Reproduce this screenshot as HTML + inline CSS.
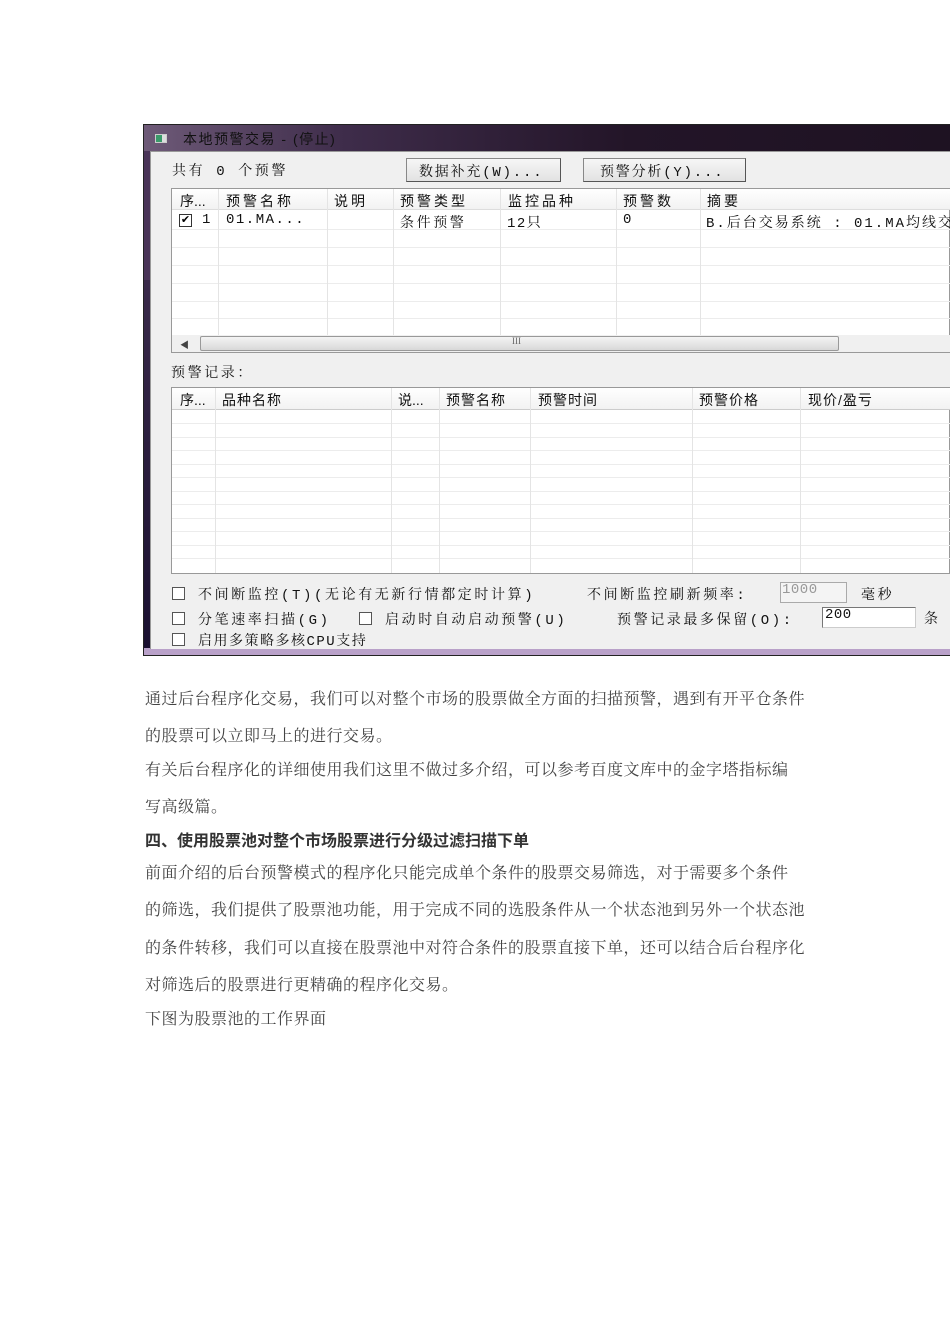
<!DOCTYPE html>
<html><head><meta charset="utf-8"><style>
*{margin:0;padding:0;box-sizing:border-box}
body{width:950px;height:1344px;background:#fff;position:relative;overflow:hidden;font-family:"Liberation Serif","Noto Serif CJK SC",serif}
.a{position:absolute;white-space:nowrap}
.w{font-family:"Liberation Sans","Noto Sans CJK SC",sans-serif;font-size:14px;letter-spacing:3px;color:#111}
.m{font-family:"Liberation Mono","Noto Serif CJK SC",serif;font-size:14px;letter-spacing:2.6px;color:#111}
.p{font-size:16px;letter-spacing:0.5px;color:#444;left:145px}
.vl{position:absolute;width:1px;background:#e4e4e4}
.hl{position:absolute;height:1px;background:#ececec}
.cb{position:absolute;width:13px;height:13px;border:1px solid #555;background:#fff}
</style></head><body>
<div class="a" style="left:143px;top:124px;width:807px;height:532px;background:#4a3458;border:1px solid #222"></div>
<div class="a" style="left:144px;top:125px;width:806px;height:26px;background:linear-gradient(90deg,#6e5a78 0%,#3e2c4a 25%,#231528 60%,#1e1222 100%)"></div>
<div class="a" style="left:144px;top:280px;width:6px;height:370px;background:linear-gradient(#3a2a4a,#1a1030)"></div>
<div class="a" style="left:144px;top:648px;width:806px;height:7px;background:#b9a1c9"></div>
<div class="a" style="left:150px;top:151px;width:800px;height:498px;background:#f0f0f0;border-left:1px solid #999;border-top:1px solid #999"></div>
<div class="a" style="left:155px;top:134px;width:12px;height:9px;background:linear-gradient(90deg,#3a9a6a 60%,#ddd 60%);border:1px solid #ccc"></div>
<div class="a w" style="left:183px;top:129px;color:#111;letter-spacing:1.5px">本地预警交易 - (停止)</div>
<div class="a m" style="left:172px;top:160px">共有 0 个预警</div>
<div class="a" style="left:406px;top:158px;width:155px;height:24px;background:linear-gradient(#f6f6f6,#e2e2e2);border:1px solid #888;border-right-color:#555;border-bottom-color:#555"></div>
<div class="a m" style="left:419px;top:161px;letter-spacing:1.8px">数据补充(W)...</div>
<div class="a" style="left:583px;top:158px;width:163px;height:24px;background:linear-gradient(#f6f6f6,#e2e2e2);border:1px solid #888;border-right-color:#555;border-bottom-color:#555"></div>
<div class="a m" style="left:600px;top:161px;letter-spacing:1.8px">预警分析(Y)...</div>
<div class="a" style="left:171px;top:188px;width:779px;height:165px;background:#fff;border:1px solid #999"></div>
<div class="a" style="left:172px;top:189px;width:778px;height:21px;background:linear-gradient(#fff,#f2f2f2);border-bottom:1px solid #ddd"></div>
<div class="hl" style="left:172px;top:229px;width:778px"></div>
<div class="hl" style="left:172px;top:247px;width:778px"></div>
<div class="hl" style="left:172px;top:265px;width:778px"></div>
<div class="hl" style="left:172px;top:283px;width:778px"></div>
<div class="hl" style="left:172px;top:301px;width:778px"></div>
<div class="hl" style="left:172px;top:318px;width:778px"></div>
<div class="vl" style="left:218px;top:189px;height:146px"></div>
<div class="vl" style="left:327px;top:189px;height:146px"></div>
<div class="vl" style="left:393px;top:189px;height:146px"></div>
<div class="vl" style="left:500px;top:189px;height:146px"></div>
<div class="vl" style="left:616px;top:189px;height:146px"></div>
<div class="vl" style="left:700px;top:189px;height:146px"></div>
<div class="a w" style="left:180px;top:191px;letter-spacing:0">序...</div>
<div class="a w" style="left:226px;top:191px">预警名称</div>
<div class="a w" style="left:334px;top:191px">说明</div>
<div class="a w" style="left:400px;top:191px">预警类型</div>
<div class="a w" style="left:508px;top:191px">监控品种</div>
<div class="a w" style="left:623px;top:191px">预警数</div>
<div class="a w" style="left:707px;top:191px">摘要</div>
<div class="cb" style="left:179px;top:214px;border-color:#333;font-size:11px;line-height:11px;text-align:center">✔</div>
<div class="a m" style="left:202px;top:212px">1</div>
<div class="a m" style="left:226px;top:212px;letter-spacing:1.5px">01.MA...</div>
<div class="a m" style="left:400px;top:212px">条件预警</div>
<div class="a m" style="left:507px;top:212px;letter-spacing:1.5px">12只</div>
<div class="a m" style="left:623px;top:212px">0</div>
<div class="a m" style="left:706px;top:212px;letter-spacing:2px">B.后台交易系统 : 01.MA均线交</div>
<div class="a" style="left:172px;top:335px;width:778px;height:17px;background:#f0f0f0"></div>
<div class="a" style="left:180px;top:338px;font-size:9px;color:#444">◀</div>
<div class="a" style="left:200px;top:336px;width:639px;height:15px;background:linear-gradient(#f4f4f4,#d8d8d8);border:1px solid #999;border-radius:2px"></div>
<div class="a" style="left:512px;top:336px;font-size:9px;color:#666">III</div>
<div class="a m" style="left:171px;top:362px">预警记录：</div>
<div class="a" style="left:171px;top:387px;width:779px;height:187px;background:#fff;border:1px solid #999"></div>
<div class="a" style="left:172px;top:388px;width:778px;height:22px;background:linear-gradient(#fff,#f2f2f2);border-bottom:1px solid #ccc"></div>
<div class="hl" style="left:172px;top:423px;width:778px"></div>
<div class="hl" style="left:172px;top:437px;width:778px"></div>
<div class="hl" style="left:172px;top:450px;width:778px"></div>
<div class="hl" style="left:172px;top:464px;width:778px"></div>
<div class="hl" style="left:172px;top:477px;width:778px"></div>
<div class="hl" style="left:172px;top:491px;width:778px"></div>
<div class="hl" style="left:172px;top:504px;width:778px"></div>
<div class="hl" style="left:172px;top:518px;width:778px"></div>
<div class="hl" style="left:172px;top:531px;width:778px"></div>
<div class="hl" style="left:172px;top:545px;width:778px"></div>
<div class="hl" style="left:172px;top:558px;width:778px"></div>
<div class="vl" style="left:215px;top:388px;height:185px"></div>
<div class="vl" style="left:391px;top:388px;height:185px"></div>
<div class="vl" style="left:439px;top:388px;height:185px"></div>
<div class="vl" style="left:530px;top:388px;height:185px"></div>
<div class="vl" style="left:692px;top:388px;height:185px"></div>
<div class="vl" style="left:800px;top:388px;height:185px"></div>
<div class="a w" style="left:180px;top:390px;letter-spacing:0">序...</div>
<div class="a w" style="left:222px;top:390px;letter-spacing:1px">品种名称</div>
<div class="a w" style="left:398px;top:390px;letter-spacing:0">说...</div>
<div class="a w" style="left:446px;top:390px;letter-spacing:1px">预警名称</div>
<div class="a w" style="left:538px;top:390px;letter-spacing:1px">预警时间</div>
<div class="a w" style="left:699px;top:390px;letter-spacing:1px">预警价格</div>
<div class="a w" style="left:808px;top:390px;letter-spacing:1px">现价/盈亏</div>
<div class="cb" style="left:172px;top:587px"></div>
<div class="a m" style="left:198px;top:584px">不间断监控(T)(无论有无新行情都定时计算)</div>
<div class="a m" style="left:587px;top:584px">不间断监控刷新频率:</div>
<div class="a" style="left:780px;top:582px;width:67px;height:21px;background:#f4f4f4;border:1px solid #aaa"></div>
<div class="a m" style="left:782px;top:582px;color:#999;letter-spacing:0.5px">1000</div>
<div class="a m" style="left:861px;top:584px">毫秒</div>
<div class="cb" style="left:172px;top:612px"></div>
<div class="a m" style="left:198px;top:609px">分笔速率扫描(G)</div>
<div class="cb" style="left:359px;top:612px"></div>
<div class="a m" style="left:385px;top:609px">启动时自动启动预警(U)</div>
<div class="a m" style="left:617px;top:609px">预警记录最多保留(O):</div>
<div class="a" style="left:822px;top:607px;width:94px;height:21px;background:#fff;border:1px solid #777;border-right-color:#ccc;border-bottom-color:#ccc"></div>
<div class="a m" style="left:825px;top:607px;letter-spacing:0.5px">200</div>
<div class="a m" style="left:924px;top:608px">条</div>
<div class="cb" style="left:172px;top:633px"></div>
<div class="a m" style="left:198px;top:630px;letter-spacing:1.5px">启用多策略多核CPU支持</div>
<div class="a p" style="top:686px">通过后台程序化交易，我们可以对整个市场的股票做全方面的扫描预警，遇到有开平仓条件</div>
<div class="a p" style="top:723px">的股票可以立即马上的进行交易。</div>
<div class="a p" style="top:757px">有关后台程序化的详细使用我们这里不做过多介绍，可以参考百度文库中的金字塔指标编</div>
<div class="a p" style="top:794px">写高级篇。</div>
<div class="a" style="left:145px;top:827px;font-size:16px;font-weight:bold;color:#333;font-family:'Liberation Sans','Noto Sans CJK SC',sans-serif">四、使用股票池对整个市场股票进行分级过滤扫描下单</div>
<div class="a p" style="top:860px">前面介绍的后台预警模式的程序化只能完成单个条件的股票交易筛选，对于需要多个条件</div>
<div class="a p" style="top:897px">的筛选，我们提供了股票池功能，用于完成不同的选股条件从一个状态池到另外一个状态池</div>
<div class="a p" style="top:935px">的条件转移，我们可以直接在股票池中对符合条件的股票直接下单，还可以结合后台程序化</div>
<div class="a p" style="top:972px">对筛选后的股票进行更精确的程序化交易。</div>
<div class="a p" style="top:1006px">下图为股票池的工作界面</div>
</body></html>
